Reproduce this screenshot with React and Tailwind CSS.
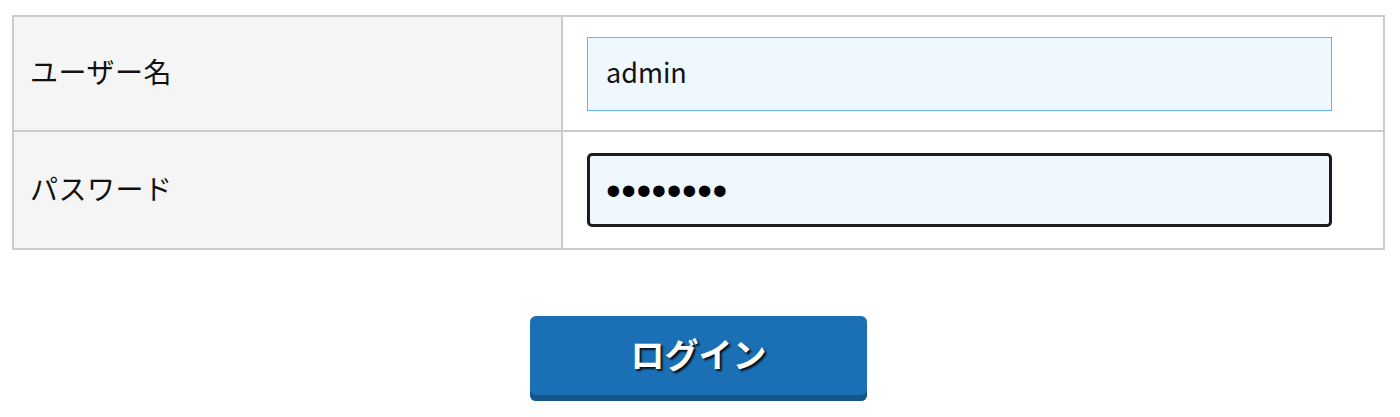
export default function App() {
  const font = { fontFamily: '"Noto Sans CJK JP", "Noto Sans", sans-serif' }

  return (
    <div className="min-h-[417px] bg-white pt-[15px] pl-[12px]" style={font}>
      <div className="w-[1373px]">
        {/* Form table */}
        <div className="grid grid-cols-[549px_1fr] border-2 border-[#cbcbcb]">
          <div className="flex h-[115px] items-center border-r-2 border-b-2 border-[#cbcbcb] bg-[#f5f5f5] pl-[16px] pb-[6px] text-[28px] tracking-[0.5px] text-[#111]">
            ユーザー名
          </div>
          <div className="flex h-[115px] items-center border-b-2 border-[#cbcbcb] pl-[24px]">
            <div className="flex h-[74px] w-[745px] items-center border-[1.5px] border-[#64b5f6] bg-[#eff7ff] pl-[18px] pb-[3px] text-[27px] text-[#111]">
              admin
            </div>
          </div>
          <div className="flex h-[116px] items-center border-r-2 border-[#cbcbcb] bg-[#f5f5f5] pl-[16px] pb-[4px] text-[28px] tracking-[0.5px] text-[#111]">
            パスワード
          </div>
          <div className="flex h-[116px] items-center pl-[24px]">
            <div
              className="flex h-[74px] w-[745px] items-center rounded-[5px] border-[3px] border-[#1c1c1c] bg-[#eff7ff] pl-[16px] text-[42px] tracking-[0.5px] text-black"
              style={{ fontFamily: '"Liberation Sans", sans-serif' }}
            >
              ••••••••
            </div>
          </div>
        </div>

        {/* Login button */}
        <div className="flex justify-center pt-[66px]">
          <button className="flex h-[85px] w-[337px] items-center justify-center rounded-[6px] bg-[#1a6fb5] pb-[10px] text-[34px] font-bold text-white shadow-[inset_0_-6px_0_#15578d] [text-shadow:2px_2px_2px_rgba(0,0,0,0.85)]">
            ログイン
          </button>
        </div>
      </div>
    </div>
  )
}
